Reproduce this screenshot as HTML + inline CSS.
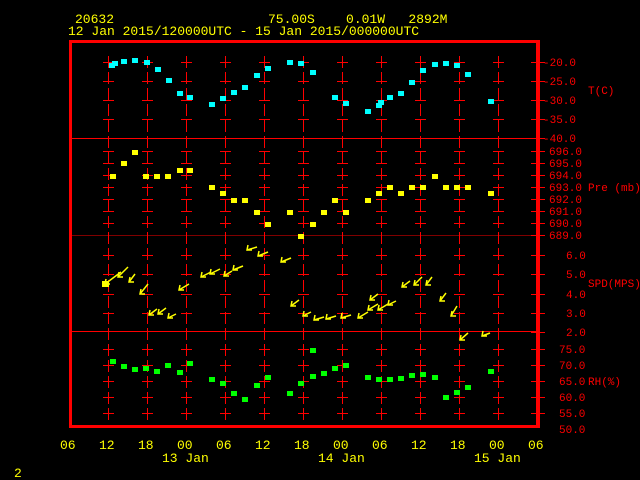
<!DOCTYPE html>
<html><head><style>
html,body{margin:0;padding:0;background:#000;}
svg{display:block}
text{font-family:"Liberation Mono",monospace;white-space:pre;}
</style></head><body>
<svg width="640" height="480" xmlns="http://www.w3.org/2000/svg" xml:space="preserve">
<g fill="#ffff00" font-size="13">
<text x="75" y="23">20632</text>
<text x="268" y="23">75.00S    0.01W   2892M</text>
<text x="68" y="35">12 Jan 2015/120000UTC - 15 Jan 2015/000000UTC</text>
<text x="60" y="449">06</text><text x="99" y="449">12</text><text x="138" y="449">18</text><text x="177" y="449">00</text><text x="216" y="449">06</text><text x="255" y="449">12</text><text x="294" y="449">18</text><text x="333" y="449">00</text><text x="372" y="449">06</text><text x="411" y="449">12</text><text x="450" y="449">18</text><text x="489" y="449">00</text><text x="528" y="449">06</text>
<text x="162" y="462">13 Jan</text><text x="318" y="462">14 Jan</text><text x="474" y="462">15 Jan</text>
<text x="14" y="477">2</text>
</g>
<g stroke="#ff0000" fill="none">
<rect x="70.5" y="41.5" width="468" height="385" stroke-width="3"/>
<line x1="70" y1="138.5" x2="540" y2="138.5"/>
<line x1="70" y1="235.5" x2="540" y2="235.5" stroke-width="0.6"/>
<line x1="70" y1="331.5" x2="540" y2="331.5"/>
</g>
<g id="grid" stroke="#ff0000" stroke-width="1" stroke-dasharray="12,4"></g>
<g id="ticks" stroke="#ff0000"></g>
<g fill="#ff0000" font-size="11">
<text x="543" y="66">-20.0</text><text x="543" y="85">-25.0</text><text x="543" y="104">-30.0</text><text x="543" y="123">-35.0</text><text x="543" y="142">-40.0</text>
<text x="588" y="94">T(C)</text>
<text x="549" y="155">696.0</text><text x="549" y="167">695.0</text><text x="549" y="179">694.0</text><text x="549" y="191">693.0</text><text x="549" y="203">692.0</text><text x="549" y="215">691.0</text><text x="549" y="227">690.0</text><text x="549" y="239">689.0</text>
<text x="588" y="191">Pre (mb)</text>
<text x="566" y="259">6.0</text><text x="566" y="278">5.0</text><text x="566" y="298">4.0</text><text x="566" y="317">3.0</text><text x="566" y="336">2.0</text>
<text x="588" y="287">SPD(MPS)</text>
<text x="559" y="353">75.0</text><text x="559" y="369">70.0</text><text x="559" y="385">65.0</text><text x="559" y="401">60.0</text><text x="559" y="417">55.0</text><text x="559" y="433">50.0</text>
<text x="588" y="385">RH(%)</text>
</g>
<g id="pts"></g>
<g id="wind" stroke="#ffff00" stroke-width="1.5" fill="none"></g>
</svg>
<script>
var ns="http://www.w3.org/2000/svg";
function el(p,t,a){var e=document.createElementNS(ns,t);for(var k in a)e.setAttribute(k,a[k]);document.getElementById(p).appendChild(e);}
var xs=[],ys=[62,81,100,119,151,163,175,187,199,211,223,255,274,294,313,349,365,381,397,413];
for(var x=108;x<=500;x+=39)xs.push(x);
xs.forEach(function(x){el("grid","line",{x1:x+.5,y1:56,x2:x+.5,y2:424});
ys.forEach(function(y){el("ticks","line",{x1:x-5,y1:y+.5,x2:x+6,y2:y+.5});});});
el("grid","line",{x1:537.5,y1:40,x2:537.5,y2:427,"stroke-width":3,"stroke-dasharray":"none"});
ys.concat([138,235,332]).forEach(function(y){el("ticks","line",{x1:531,y1:y+.5,x2:545,y2:y+.5});});
var T=[[112,65],[115,63],[124,61],[135,60],[147,62],[158,69],[169,80],[180,93],[190,97],[212,104],[223,98],[234,92],[245,87],[257,75],[268,68],[290,62],[301,63],[313,72],[335,97],[346,103],[368,111],[379,105],[381,102],[390,97],[401,93],[412,82],[423,70],[435,64],[446,63],[457,65],[468,74],[491,101]];
var P=[[113,176],[124,163],[135,152],[146,176],[157,176],[168,176],[180,170],[190,170],[212,187],[223,193],[234,200],[245,200],[257,212],[268,224],[290,212],[301,236],[313,224],[324,212],[335,200],[346,212],[368,200],[379,193],[390,187],[401,193],[412,187],[423,187],[435,176],[446,187],[457,187],[468,187],[491,193]];
var R=[[113,361],[124,366],[135,369],[146,368],[157,371],[168,365],[180,372],[190,363],[212,379],[223,383],[234,393],[245,399],[257,385],[268,377],[290,393],[301,383],[313,350],[313,376],[324,373],[335,368],[346,365],[368,377],[379,379],[390,379],[401,378],[412,375],[423,374],[435,377],[446,397],[457,392],[468,387],[491,371]];
[[T,"#00ffff"],[P,"#ffff00"],[R,"#00ff00"]].forEach(function(s){s[0].forEach(function(p){el("pts","rect",{x:p[0]-3,y:p[1]-2,width:6,height:5,fill:s[1]});});});
el("pts","rect",{x:102,y:281,width:7,height:6,fill:"#ffff00"});
var W=[[105,284,16,-12],[118,277,10,-10],[129,282,6,-8],[140,294,8,-10],[149,315,8,-6],[158,314,8,-6],[168,318,8,-4],[179,290,10,-6],[201,277,10,-5],[210,274,10,-5],[224,276,8,-5],[233,270,10,-4],[247,250,10,-3],[258,256,10,-4],[281,262,10,-4],[291,306,8,-6],[303,316,8,-4],[314,320,10,-3],[326,319,10,-3],[341,318,10,-3],[358,318,10,-6],[368,310,10,-6],[378,310,10,-6],[388,305,8,-4],[370,300,8,-6],[402,287,8,-6],[414,285,8,-8],[426,285,6,-8],[440,301,6,-8],[451,316,6,-10],[460,340,8,-7],[482,336,8,-3]];
W.forEach(function(w){var x=w[0],y=w[1],dx=w[2],dy=w[3];
el("wind","line",{x1:x,y1:y,x2:x+dx,y2:y+dy});
el("wind","polyline",{points:(x+1)+","+(y-5)+" "+x+","+y+" "+(x+5)+","+(y)});});
</script>
</body></html>
